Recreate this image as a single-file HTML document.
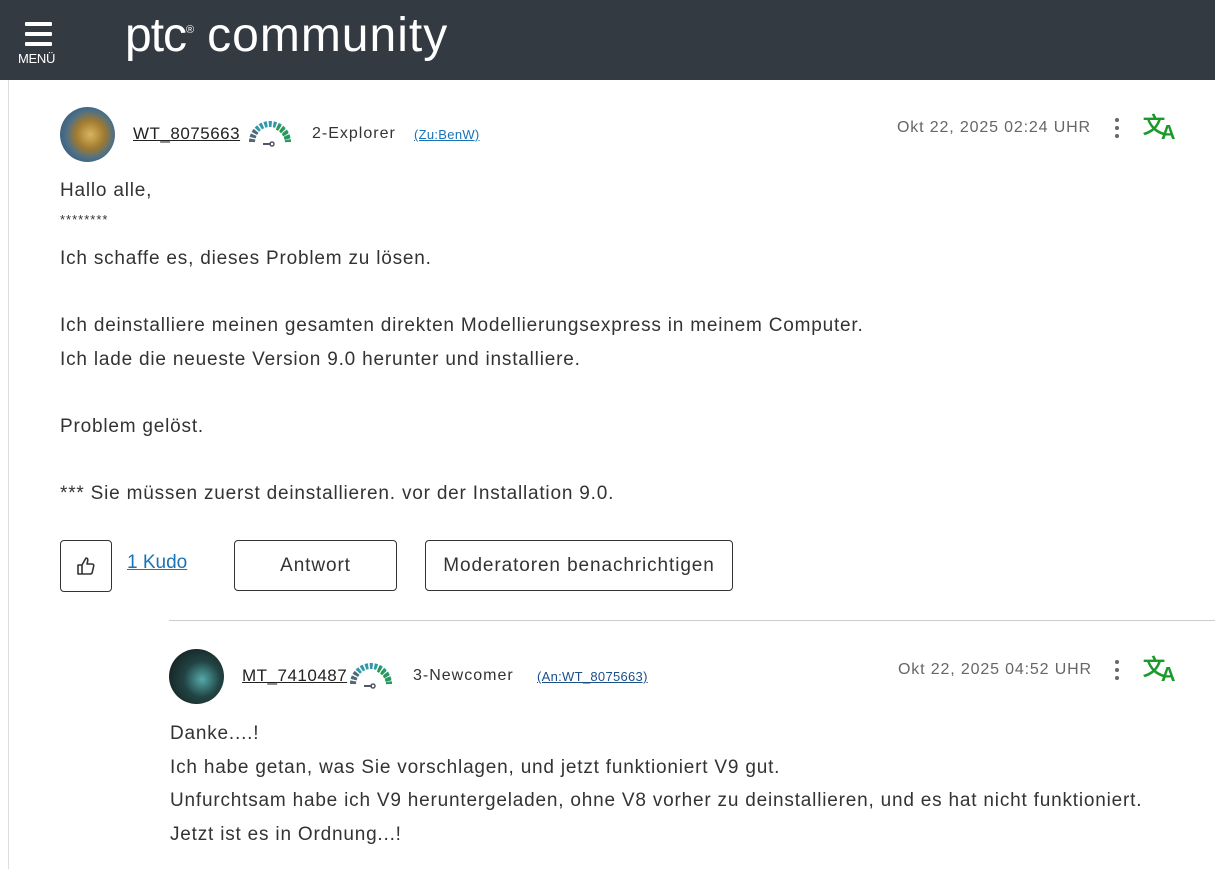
<!DOCTYPE html>
<html><head><meta charset="utf-8"><style>
body{margin:0;width:1215px;height:869px;overflow:hidden;background:#fff;font-family:"Liberation Sans",sans-serif;color:#333;position:relative}
.hdr{position:absolute;left:0;top:0;width:1215px;height:80px;background:#343a42}
.bar{position:absolute;left:25px;width:27px;height:4px;background:#fff;border-radius:1px}
.menu{position:absolute;left:18px;top:51px;color:#fff;font-size:13px;letter-spacing:-.3px}
.logo{position:absolute;left:125px;top:8px;color:#fff;font-size:48px;letter-spacing:-1px}
.logo sup{font-size:11px;vertical-align:top;position:relative;top:16px;margin-right:14px}
.logo .c{letter-spacing:1px}
.vline{position:absolute;left:8px;top:80px;width:1px;height:789px;background:#ddd}
.abs{position:absolute;white-space:nowrap}
.av{position:absolute;border-radius:50%}
.name{font-size:17px;color:#222;text-decoration:underline;letter-spacing:.5px}
.rank{font-size:16px;color:#333;letter-spacing:1px}
.to{font-size:13px;color:#1a73b5;text-decoration:underline;letter-spacing:.3px}
.date{font-size:16px;color:#666;letter-spacing:.85px}
.txt{font-size:19px;color:#333;line-height:33.5px;letter-spacing:.8px}
.btn{position:absolute;border:1px solid #333;border-radius:4px;font-size:19px;color:#333;display:flex;align-items:center;justify-content:center;box-sizing:border-box;letter-spacing:.9px}
.dots{position:absolute;width:4px}
.dots i{display:block;width:4px;height:4px;border-radius:50%;background:#666;margin-bottom:4px}
</style></head><body>
<div class="hdr">
<div class="bar" style="top:22px"></div><div class="bar" style="top:32px"></div><div class="bar" style="top:42px"></div>
<div class="menu">MENÜ</div>
<div class="logo">ptc<sup>®</sup><span class="c">community</span></div>
</div>
<div class="vline"></div>

<div class="av" style="left:60px;top:107px;width:55px;height:55px;background:radial-gradient(circle at 55% 50%,#d8b560 0,#a07a30 35%,#4a6f8a 60%,#2c4b66 100%)"></div>
<div class="abs name" style="left:133px;top:124px">WT_8075663</div>
<svg class="abs" style="left:247px;top:121px" width="46" height="26" viewBox="0 0 46 26"><path d="M5 21 A18 18 0 0 1 41 21" fill="none" stroke="#39a" stroke-width="6" stroke-dasharray="3 1.5"/><path d="M30 6 A18 18 0 0 1 41 21" fill="none" stroke="#2a9a4a" stroke-width="6" stroke-dasharray="3 1.5"/><path d="M5 21 A18 18 0 0 1 10 9" fill="none" stroke="#567" stroke-width="6" stroke-dasharray="3 1.5"/><line x1="16" y1="23" x2="24" y2="23" stroke="#556" stroke-width="2"/><circle cx="25" cy="23" r="2" fill="none" stroke="#556" stroke-width="1.5"/></svg>
<div class="abs rank" style="left:312px;top:125px">2-Explorer</div>
<div class="abs to" style="left:414px;top:127px">(Zu:BenW)</div>
<div class="abs date" style="left:897px;top:119px">Okt 22, 2025 02:24 UHR</div>
<div class="dots" style="left:1115px;top:118px"><i></i><i></i><i></i></div>
<div class="abs" style="left:1143px;top:108px;color:#1a9a2a;font-size:22px;font-weight:bold">文<span style="font-size:20px;position:relative;top:6px;left:-4px">A</span></div>

<div class="abs txt" style="left:60px;top:174px">Hallo alle,</div>
<div class="abs" style="left:60px;top:212px;font-size:13px;color:#333;letter-spacing:1px">********</div>
<div class="abs txt" style="left:60px;top:242px">Ich schaffe es, dieses Problem zu lösen.<br><br>Ich deinstalliere meinen gesamten direkten Modellierungsexpress in meinem Computer.<br>Ich lade die neueste Version 9.0 herunter und installiere.<br><br>Problem gelöst.<br><br>*** Sie müssen zuerst deinstallieren. vor der Installation 9.0.</div>

<div class="btn" style="left:60px;top:540px;width:52px;height:52px"><svg width="20" height="20" viewBox="0 0 20 20"><path d="M2 9h4v9H2zM6 9l4-7c2 0 2 2 1.5 4L11 8h5c1.5 0 2 1 1.7 2l-1.5 6.5c-.3 1-1 1.5-2 1.5H6" fill="none" stroke="#333" stroke-width="1.6" stroke-linejoin="round"/></svg></div>
<div class="abs" style="left:127px;top:552px;font-size:19px;color:#1a73b5;text-decoration:underline">1 Kudo</div>
<div class="btn" style="left:234px;top:540px;width:163px;height:51px">Antwort</div>
<div class="btn" style="left:425px;top:540px;width:308px;height:51px">Moderatoren benachrichtigen</div>

<div class="abs" style="left:169px;top:620px;width:1046px;height:1px;background:#ccc"></div>

<div class="av" style="left:169px;top:649px;width:55px;height:55px;background:radial-gradient(circle at 60% 55%,#5aa 0,#244 40%,#111 100%)"></div>
<div class="abs name" style="left:242px;top:666px">MT_7410487</div>
<svg class="abs" style="left:348px;top:663px" width="46" height="26" viewBox="0 0 46 26"><path d="M5 21 A18 18 0 0 1 41 21" fill="none" stroke="#39a" stroke-width="6" stroke-dasharray="3 1.5"/><path d="M30 6 A18 18 0 0 1 41 21" fill="none" stroke="#2a9a4a" stroke-width="6" stroke-dasharray="3 1.5"/><path d="M5 21 A18 18 0 0 1 10 9" fill="none" stroke="#567" stroke-width="6" stroke-dasharray="3 1.5"/><line x1="16" y1="23" x2="24" y2="23" stroke="#556" stroke-width="2"/><circle cx="25" cy="23" r="2" fill="none" stroke="#556" stroke-width="1.5"/></svg>
<div class="abs rank" style="left:413px;top:667px">3-Newcomer</div>
<div class="abs to" style="left:537px;top:669px;color:#1a4f8a">(An:WT_8075663)</div>
<div class="abs date" style="left:898px;top:661px">Okt 22, 2025 04:52 UHR</div>
<div class="dots" style="left:1115px;top:660px"><i></i><i></i><i></i></div>
<div class="abs" style="left:1143px;top:650px;color:#1a9a2a;font-size:22px;font-weight:bold">文<span style="font-size:20px;position:relative;top:6px;left:-4px">A</span></div>

<div class="abs txt" style="left:170px;top:717px">Danke....!<br>Ich habe getan, was Sie vorschlagen, und jetzt funktioniert V9 gut.<br>Unfurchtsam habe ich V9 heruntergeladen, ohne V8 vorher zu deinstallieren, und es hat nicht funktioniert.<br>Jetzt ist es in Ordnung...!</div>
</body></html>
